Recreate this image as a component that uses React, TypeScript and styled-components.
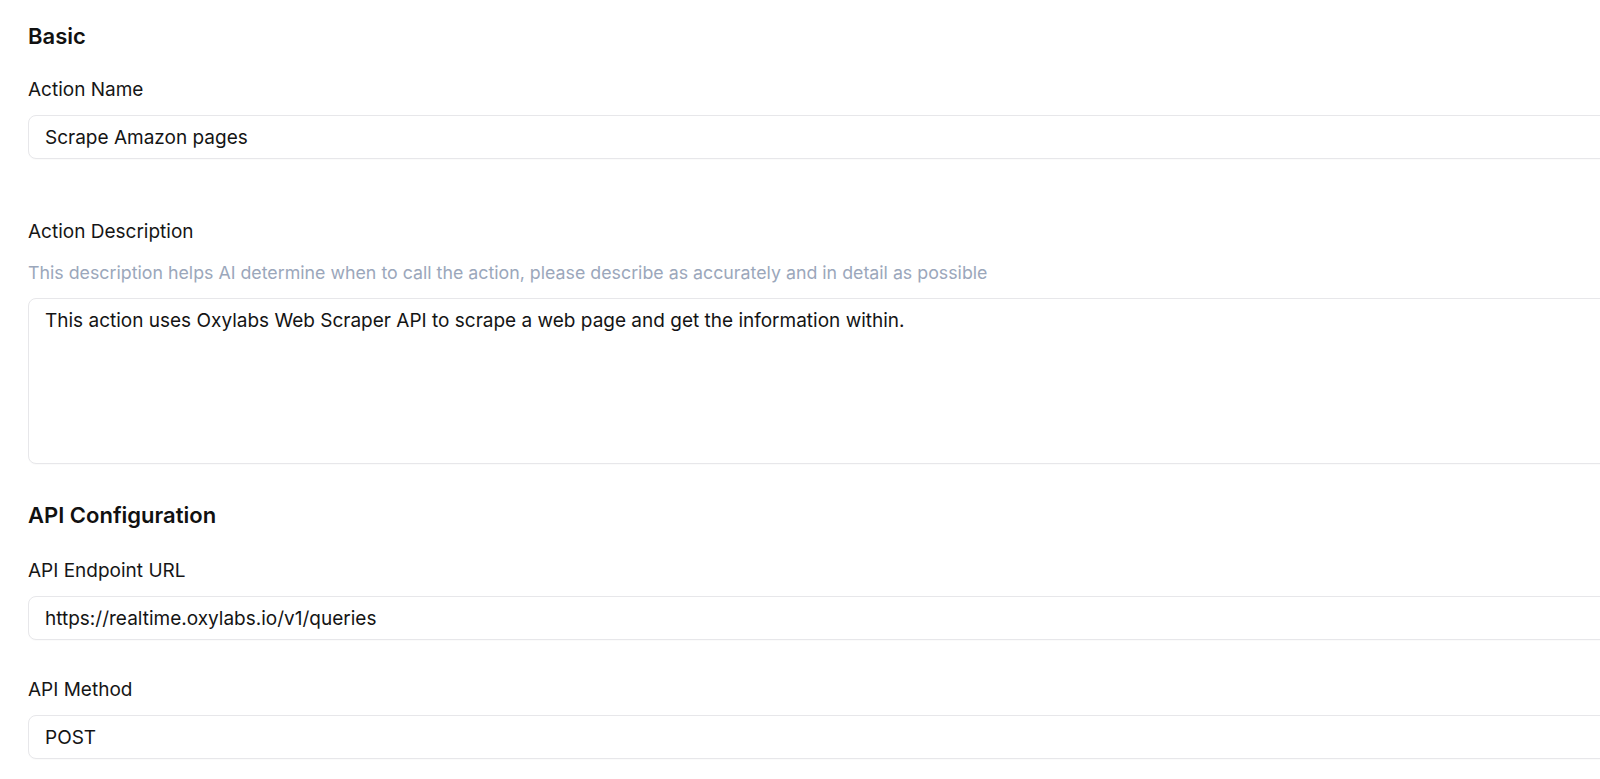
import { createGlobalStyle, styled } from 'styled-components';

const GlobalStyle = createGlobalStyle`
  html, body {
    margin: 0;
    padding: 0;
    background: #ffffff;
    overflow: hidden;
  }
  body {
    font-family: Inter, "Noto Sans", sans-serif;
    color: #141414;
  }
`;

const Page = styled.div`
  width: 1680px;
  padding: 22px 0 0 28px;
  display: flex;
  flex-direction: column;
`;

const SectionTitle = styled.h2<{ $before: number; $after: number }>`
  margin: ${(p) => p.$before}px 0 ${(p) => p.$after}px;
  font-size: 22px;
  line-height: 28px;
  font-weight: 600;
  color: #111111;
`;

const FormGroup = styled.div<{ $spacing?: number }>`
  display: flex;
  flex-direction: column;
  margin-bottom: ${(p) => p.$spacing ?? 38}px;
`;

const Label = styled.label<{ $flush?: boolean }>`
  font-size: 19px;
  line-height: 24px;
  color: #161616;
  margin-bottom: ${(p) => (p.$flush ? 0 : 13)}px;
`;

const Hint = styled.div`
  font-size: 17.8px;
  line-height: 24px;
  color: #9ba7bb;
  margin: 17px 0 13px;
`;

const Input = styled.input`
  box-sizing: border-box;
  height: 44px;
  width: 100%;
  padding: 8px 16px;
  font-family: inherit;
  font-size: 19px;
  line-height: 25px;
  color: #141414;
  background: #ffffff;
  border: 1px solid #e7e7ea;
  border-radius: 8px;
  box-shadow: 0 1px 1px rgba(0, 0, 0, 0.02);
  outline: none;
`;

const TextArea = styled.textarea`
  box-sizing: border-box;
  height: 166px;
  width: 100%;
  padding: 9px 16px;
  font-family: inherit;
  font-size: 19px;
  line-height: 25px;
  color: #141414;
  background: #ffffff;
  border: 1px solid #e7e7ea;
  border-radius: 8px;
  box-shadow: 0 1px 1px rgba(0, 0, 0, 0.02);
  resize: none;
  outline: none;
`;

const App = () => {
  return (
    <>
      <GlobalStyle />
      <Page>
        <SectionTitle $before={0} $after={28}>Basic</SectionTitle>

        <FormGroup $spacing={61}>
          <Label htmlFor="actionName">Action Name</Label>
          <Input id="actionName" type="text" defaultValue="Scrape Amazon pages" />
        </FormGroup>

        <FormGroup $spacing={0}>
          <Label htmlFor="actionDescription" $flush>
            Action Description
          </Label>
          <Hint>
            This description helps AI determine when to call the action, please describe as accurately and in detail as possible
          </Hint>
          <TextArea
            id="actionDescription"
            defaultValue="This action uses Oxylabs Web Scraper API to scrape a web page and get the information within."
          />
        </FormGroup>

        <SectionTitle $before={37} $after={30}>API Configuration</SectionTitle>

        <FormGroup>
          <Label htmlFor="endpoint">API Endpoint URL</Label>
          <Input id="endpoint" type="text" defaultValue="https://realtime.oxylabs.io/v1/queries" />
        </FormGroup>

        <FormGroup>
          <Label htmlFor="method">API Method</Label>
          <Input id="method" type="text" defaultValue="POST" />
        </FormGroup>
      </Page>
    </>
  );
};

export default App;
